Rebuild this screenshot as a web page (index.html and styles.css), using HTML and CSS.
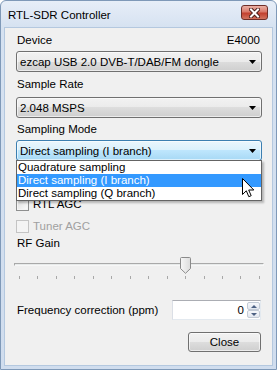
FILE: index.html
```html
<!DOCTYPE html>
<html lang="en">
<head>
    <meta charset="UTF-8">
    <meta name="viewport" content="width=device-width, initial-scale=1.0">
    <title>RTL-SDR Controller</title>
    <link rel="stylesheet" href="styles.css">
</head>
<body>

<div class="window">
    <div class="titlebar">
        <span class="title">RTL-SDR Controller</span>
        <div class="close-x">
            <svg width="11" height="10" viewBox="0 0 11 10">
                <path d="M2 1.5 L9 8.5 M9 1.5 L2 8.5" stroke="#4a1f1a" stroke-width="4" stroke-linecap="square"/>
                <path d="M2 1.5 L9 8.5 M9 1.5 L2 8.5" stroke="#fff" stroke-width="2" stroke-linecap="square"/>
            </svg>
        </div>
    </div>

    <div class="client">
        <div class="label-row">
            <span>Device</span>
            <span>E4000</span>
        </div>
        <div class="combo">
            <span>ezcap USB 2.0 DVB-T/DAB/FM dongle</span>
            <svg class="arrow" width="7" height="4" viewBox="0 0 7 4"><polygon points="0,0 7,0 3.5,4" fill="#000"/></svg>
        </div>

        <div class="label sample-rate">Sample Rate</div>
        <div class="combo rate-combo">
            <span>2.048 MSPS</span>
            <svg class="arrow" width="7" height="4" viewBox="0 0 7 4"><polygon points="0,0 7,0 3.5,4" fill="#000"/></svg>
        </div>

        <div class="label sampling-mode">Sampling Mode</div>
        <div class="combo-wrap">
            <div class="combo focused">
                <span>Direct sampling (I branch)</span>
                <svg class="arrow" width="7" height="4" viewBox="0 0 7 4"><polygon points="0,0 7,0 3.5,4" fill="#000"/></svg>
            </div>
            <ul class="droplist">
                <li>Quadrature sampling</li>
                <li class="selected">Direct sampling (I branch)</li>
                <li>Direct sampling (Q branch)</li>
            </ul>
        </div>

        <label class="check rtl-agc"><span class="box"></span>RTL AGC</label>
        <label class="check tuner-agc disabled"><span class="box"></span>Tuner AGC</label>

        <div class="label rf-gain">RF Gain</div>
        <div class="slider">
            <div class="track"></div>
            <svg class="thumb" width="11" height="17" viewBox="0 0 11 17">
                <defs>
                    <linearGradient id="thumbFill" x1="0" y1="0" x2="1" y2="0">
                        <stop offset="0" stop-color="#f7f7f7"/>
                        <stop offset="1" stop-color="#dcdcdc"/>
                    </linearGradient>
                </defs>
                <path d="M1.5 0.5 H9.5 Q10.5 0.5 10.5 1.5 V11.5 L5.5 16.3 L0.5 11.5 V1.5 Q0.5 0.5 1.5 0.5 Z" fill="url(#thumbFill)" stroke="#8a8a8a"/>
            </svg>
            <div class="ticks">
                <i></i><i></i><i></i><i></i><i></i><i></i><i></i>
                <i></i><i></i><i></i><i></i><i></i><i></i><i></i>
            </div>
        </div>

        <div class="freq-row">
            <span>Frequency correction (ppm)</span>
            <div class="updown">
                <span class="value">0</span>
                <div class="spin">
                    <b class="up"></b>
                    <b class="down"></b>
                </div>
            </div>
        </div>

        <button class="close-btn">Close</button>
    </div>

    <svg class="cursor" width="13" height="20" viewBox="0 0 13 20">
        <path d="M0.5 0.5 L0.5 16.5 L4.3 12.8 L6.8 18.7 L9.2 17.7 L6.7 12 L11.8 12 Z" fill="#fff" stroke="#000" stroke-linejoin="miter"/>
    </svg>
</div>

</body>
</html>
```

FILE: styles.css
```css
* {
    box-sizing: border-box;
}

body {
    margin: 0;
    font-family: "Liberation Sans", Arial, sans-serif;
    font-size: 11.5px;
    color: #000;
    background: #fff;
}

.window {
    position: relative;
    width: 277px;
    height: 370px;
    display: flex;
    flex-direction: column;
    border: 1px solid #7f99b8;
    border-radius: 6px 6px 0 0;
    background: linear-gradient(#e7eef8, #d6e2f1 26px, #d0ddee);
}

.titlebar {
    height: 26px;
    display: flex;
    justify-content: space-between;
    align-items: flex-start;
    padding-left: 7px;
}

.title {
    line-height: 26px;
    padding-top: 1px;
}

.close-x {
    width: 27px;
    height: 15px;
    margin-top: 4px;
    margin-right: 8px;
    display: flex;
    align-items: center;
    justify-content: center;
    border: 1px solid #6e2e28;
    border-radius: 3px;
    background: linear-gradient(#eab0a4, #d9796a 45%, #c2402f 55%, #d1735f);
}

.client {
    flex: 1;
    margin: 0 3px 3px;
    padding: 5px 10px 0 11px;
    display: flex;
    flex-direction: column;
    border: 1px solid #b4c8df;
    background: #f0f0f0;
}

.label,
.label-row {
    line-height: 15px;
    padding-left: 1px;
}

.label-row {
    display: flex;
    justify-content: space-between;
    padding-right: 2px;
}

/* combo boxes */
.combo {
    height: 21px;
    margin-top: 3px;
    display: flex;
    align-items: center;
    justify-content: space-between;
    padding: 0 5px 0 3px;
    border: 1px solid #707070;
    border-radius: 3px;
    background: linear-gradient(#f2f2f2, #ebebeb 50%, #dddddd 50%, #cfcfcf);
    box-shadow: inset 0 0 0 1px rgba(255, 255, 255, 0.6);
}

.combo.focused {
    margin-top: 0;
    border-color: #3c7fb1;
    background: linear-gradient(#eaf6fd, #d9f0fc 50%, #bee6fd 50%, #a7d9f5);
}

.sample-rate {
    margin-top: 5px;
}

.rate-combo {
    margin-top: 5px;
}

.sampling-mode {
    margin-top: 4px;
}

.combo-wrap {
    position: relative;
    margin-top: 3px;
}

.droplist {
    position: absolute;
    top: 20px;
    left: 0;
    right: 0;
    margin: 0;
    padding: 0;
    list-style: none;
    border: 1px solid #646464;
    background: #fff;
    box-shadow: 2px 2px 2px rgba(0, 0, 0, 0.25);
    z-index: 2;
}

.droplist li {
    height: 13px;
    line-height: 13px;
    padding-left: 1px;
    white-space: nowrap;
}

.droplist li.selected {
    background-color: #3399ff;
    color: white;
}

/* check boxes */
.check {
    display: flex;
    align-items: center;
    gap: 4px;
    height: 13px;
    line-height: 13px;
}

.rtl-agc {
    margin-top: 37px;
}

.tuner-agc {
    margin-top: 9px;
}

.check .box {
    width: 13px;
    height: 13px;
    border: 1px solid #8e8f8f;
    background: linear-gradient(135deg, #dcdcdc, #fdfdfd);
    box-shadow: inset 0 0 0 1px #f4f4f4;
}

.check.disabled {
    color: #a0a0a0;
}

.check.disabled .box {
    border-color: #c4c4c4;
    background: #f4f4f4;
    box-shadow: none;
}

.rf-gain {
    margin-top: 3px;
}

/* trackbar */
.slider {
    position: relative;
    height: 25px;
    margin-top: 4px;
}

.track {
    height: 3px;
    margin: 8px -2px 0;
    border: 1px solid;
    border-color: #a9a9a9 #f7f7f7 #f7f7f7 #a9a9a9;
    background: #e7eaea;
}

.thumb {
    position: absolute;
    left: 164px;
    top: 2px;
}

.ticks {
    display: flex;
    justify-content: space-between;
    margin: 10px 2px 0 3px;
}

.ticks i {
    width: 1px;
    height: 3px;
    background: #a8a8a8;
}

/* frequency correction */
.freq-row {
    display: flex;
    align-items: center;
    justify-content: space-between;
    height: 20px;
    margin-top: 20px;
    padding-left: 1px;
}

.updown {
    width: 89px;
    height: 20px;
    margin-right: 1px;
    display: flex;
    align-items: center;
    justify-content: flex-end;
    border: 1px solid;
    border-color: #abadb3 #e3e9ef #e3e9ef #dbdfe6;
    background: #fff;
}

.updown .value {
    padding-right: 3px;
}

.spin {
    width: 13px;
    height: 16px;
    display: flex;
    flex-direction: column;
}

.spin b {
    flex: 1;
    display: flex;
    align-items: center;
    justify-content: center;
    border: 1px solid #c3cbd6;
    border-radius: 2px;
    background: linear-gradient(#f6f8fb, #e2e7ef);
}

.spin .up::after {
    content: "";
    border-left: 3px solid transparent;
    border-right: 3px solid transparent;
    border-bottom: 3px solid #4c6183;
}

.spin .down::after {
    content: "";
    border-left: 3px solid transparent;
    border-right: 3px solid transparent;
    border-top: 3px solid #4c6183;
}

.close-btn {
    align-self: flex-end;
    width: 73px;
    height: 20px;
    margin-top: 12px;
    margin-right: 1px;
    padding: 0;
    font-family: inherit;
    font-size: 11.5px;
    color: #000;
    border: 1px solid #707070;
    border-radius: 3px;
    background: linear-gradient(#f2f2f2, #ebebeb 50%, #dddddd 50%, #cfcfcf);
    box-shadow: inset 0 0 0 1px rgba(255, 255, 255, 0.6);
}

.cursor {
    position: absolute;
    left: 241px;
    top: 177px;
    z-index: 3;
}
```
